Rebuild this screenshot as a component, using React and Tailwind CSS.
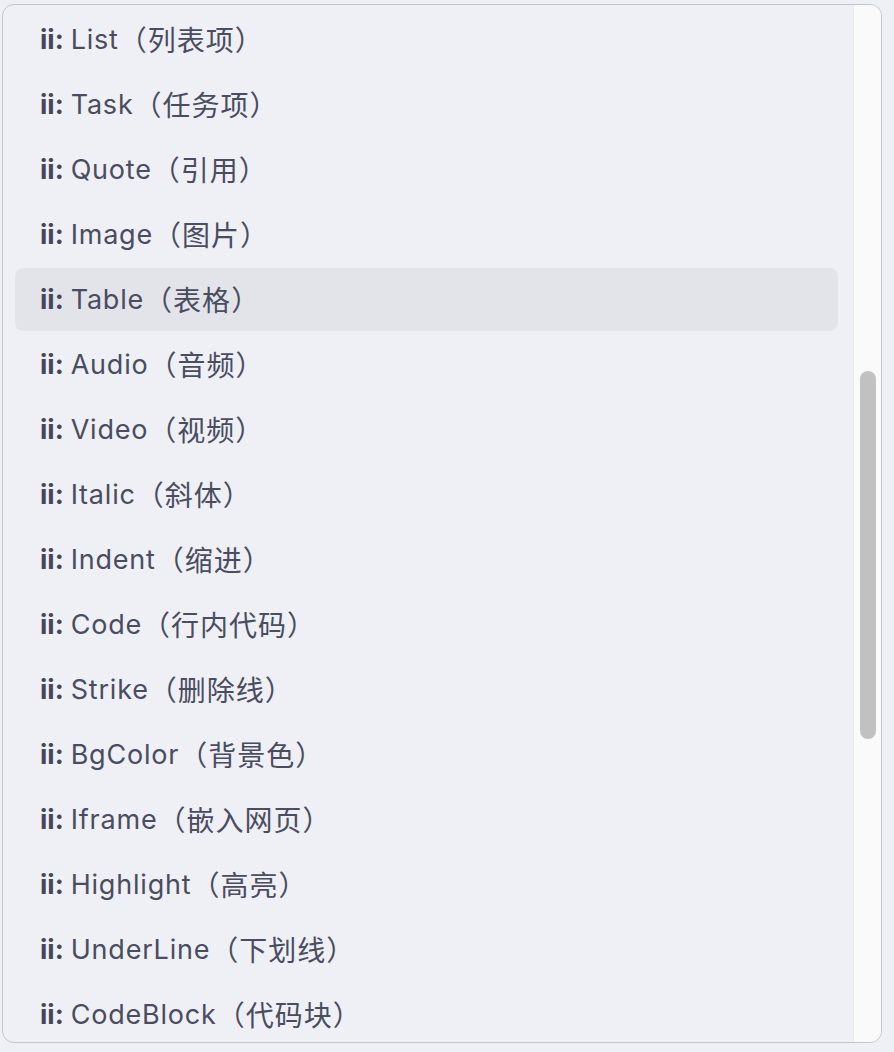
const ITEMS = [
  ['List', '列表项'],
  ['Task', '任务项'],
  ['Quote', '引用'],
  ['Image', '图片'],
  ['Table', '表格'],
  ['Audio', '音频'],
  ['Video', '视频'],
  ['Italic', '斜体'],
  ['Indent', '缩进'],
  ['Code', '行内代码'],
  ['Strike', '删除线'],
  ['BgColor', '背景色'],
  ['Iframe', '嵌入网页'],
  ['Highlight', '高亮'],
  ['UnderLine', '下划线'],
  ['CodeBlock', '代码块'],
]

export default function App() {
  return (
    <div className="w-[894px] h-[1052px] bg-[#eef0f5] pt-[4px] pl-[2px]"
      style={{ fontFamily: 'Inter, "Noto Sans CJK SC", sans-serif' }}>
      <div className="w-[880px] h-[1039px] border-[1.5px] border-[#c3c4c8] rounded-[12px] bg-[#eff0f5] overflow-hidden flex">
        {/* list */}
        <div className="flex-1 overflow-hidden pt-[3px] pl-[12px] pr-[15px]">
          {ITEMS.map(([en, zh], i) => (
            <div key={en}
              className={`h-[63px] mb-[2px] rounded-[8px] flex items-center pl-[25px] pt-[2px] text-[27px] text-[#4a4c5f] ${i === 4 ? 'bg-[#e3e4e9]' : ''}`}>
              <span className="font-bold text-[#454759]">ii:</span>
              <span className="ml-[7px] tracking-[0.8px]">{en}</span>
              <span className="text-[28px] tracking-[1px]">（{zh}）</span>
            </div>
          ))}
        </div>
        {/* scrollbar */}
        <div className="w-[28px] shrink-0 bg-[#fafafa] border-l border-[#e9e9ec] pt-[366px] flex justify-center">
          <div className="w-[16px] h-[368px] rounded-full bg-[#c1c1c1]" />
        </div>
      </div>
    </div>
  )
}
